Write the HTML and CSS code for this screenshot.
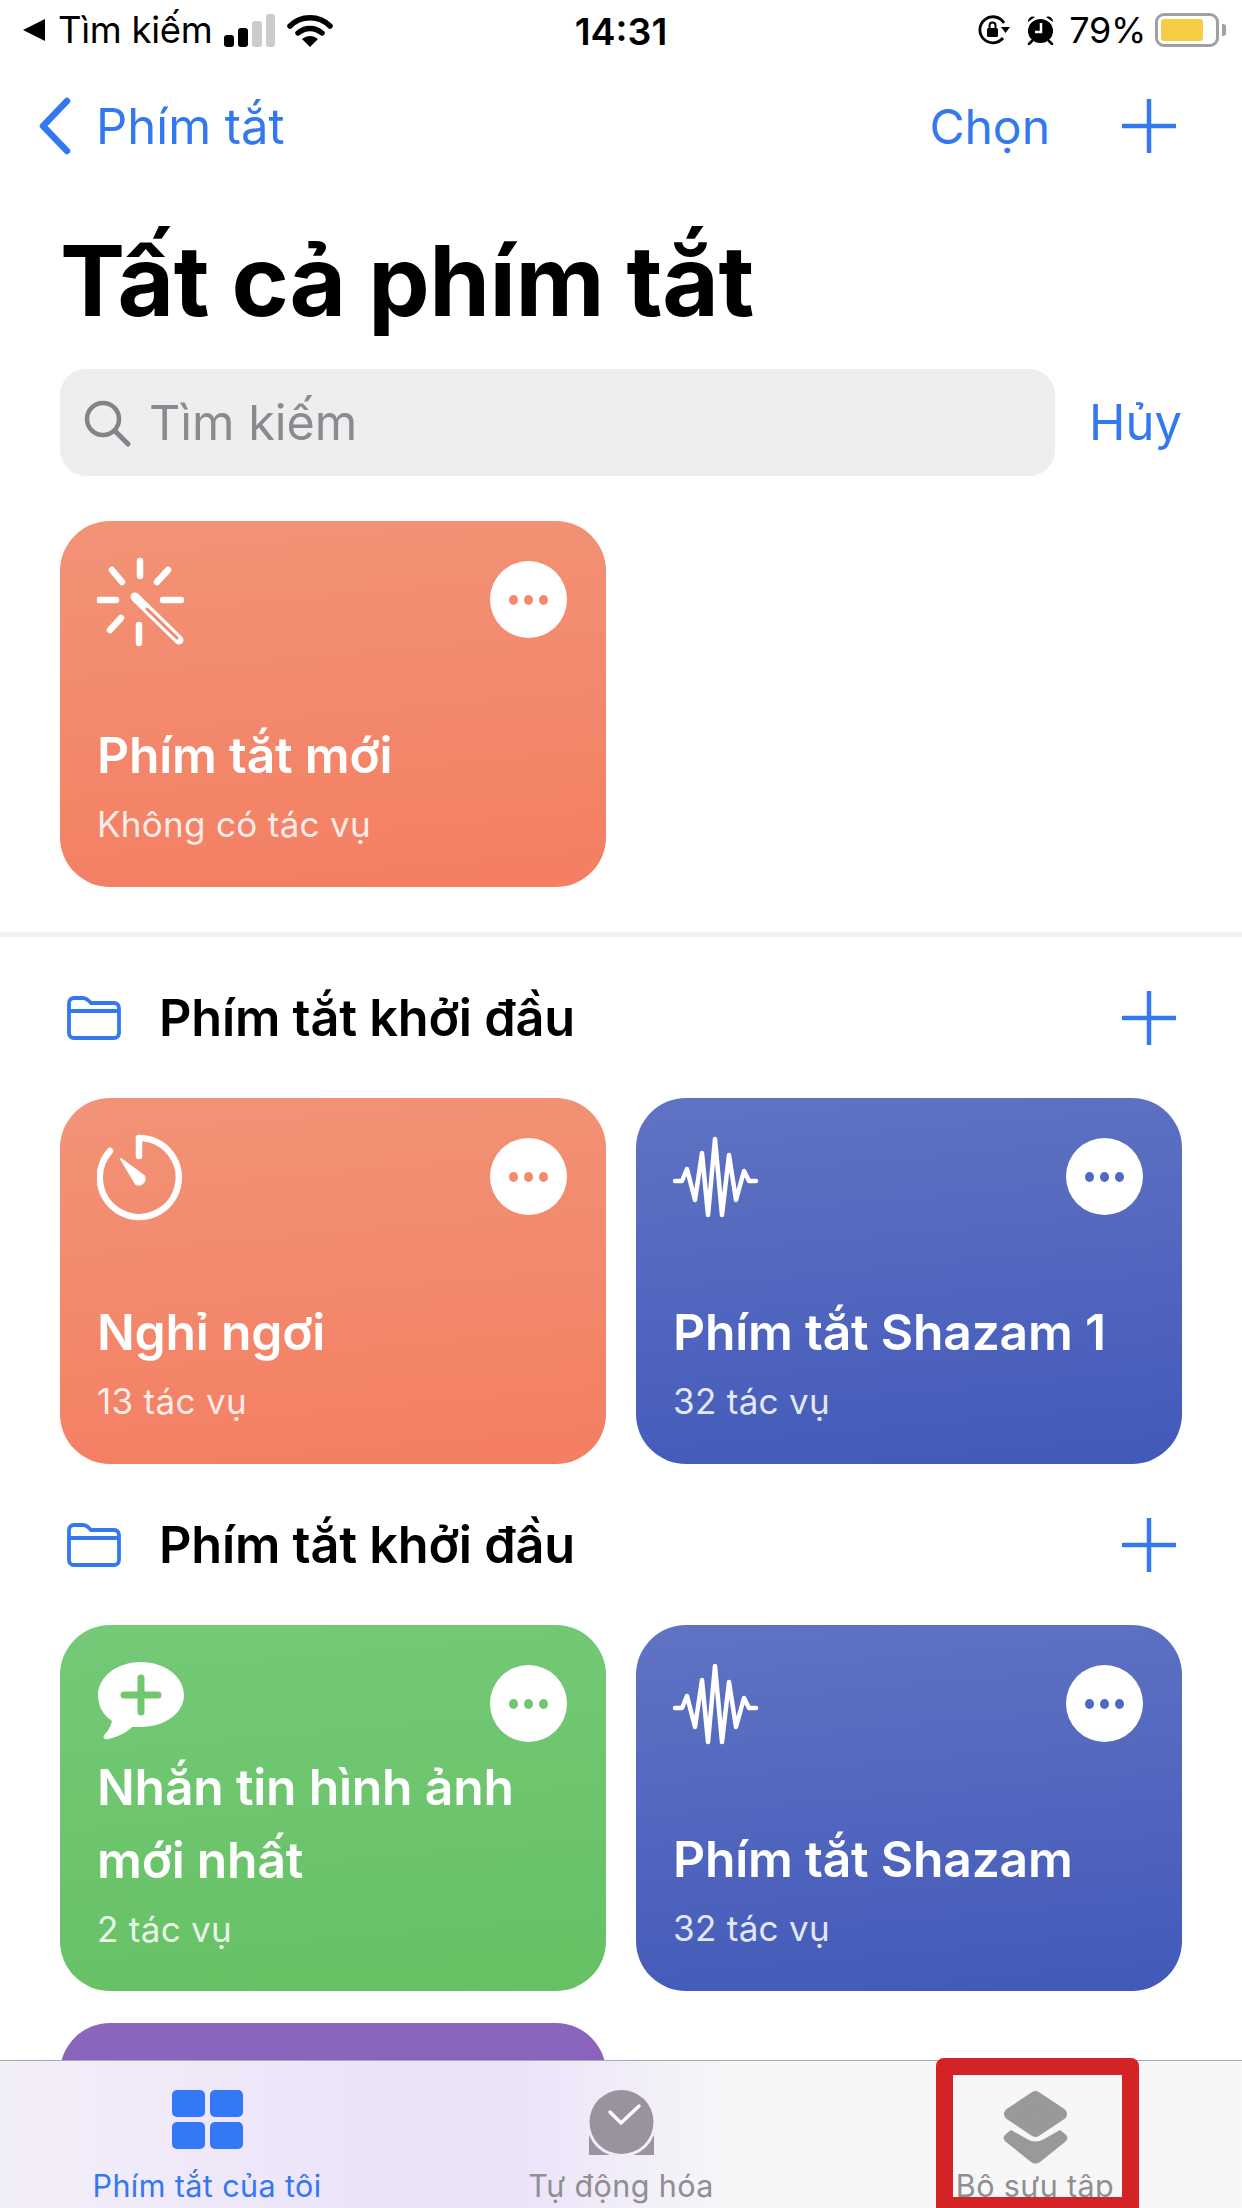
FILE: index.html
```html
<!DOCTYPE html>
<html lang="vi">
<head>
<meta charset="utf-8">
<title>Phím tắt</title>
<link rel="stylesheet" href="styles.css">
</head>
<body>
<div class="screen">
  <div class="status">
    <div class="status-left">
      <svg class="back-tri" width="24" height="24" viewBox="0 0 24 24"><path d="M23 1v22L1 12z" fill="#000"/></svg>
      <span class="status-text">Tìm kiếm</span>
      <svg class="signal" width="51" height="33" viewBox="0 0 51 33"><rect x="0" y="21" width="10" height="12" rx="3" fill="#000"/><rect x="14" y="14" width="10" height="19" rx="3" fill="#000"/><rect x="28" y="7" width="10" height="26" rx="3" fill="#ccc"/><rect x="42" y="0" width="9" height="33" rx="3" fill="#ccc"/></svg>
      <svg class="wifi" width="46" height="33" viewBox="0 0 46 33"><path d="M3 12C14 1 32 1 43 12" fill="none" stroke="#000" stroke-width="5.500" stroke-linecap="round"/><path d="M11 19c7-6 17-6 24 0" fill="none" stroke="#000" stroke-width="5.500" stroke-linecap="round"/><path d="M15 25c5-4 11-4 16 0l-8 8z" fill="#000"/></svg>
    </div>
    <div class="status-time">14:31</div>
    <div class="status-right">
      <svg class="rot" width="32" height="30" viewBox="0 0 32 30"><path d="M25 23A13 13 0 1 1 26 8" fill="none" stroke="#000" stroke-width="2.800"/><path d="M23 12h9l-4.500 6z" fill="#000"/><rect x="9" y="13" width="11" height="9" rx="1.500" fill="#000"/><path d="M11.500 13v-2.500a3 3 0 0 1 6 0V13" fill="none" stroke="#000" stroke-width="2"/></svg>
      <svg class="alarm" width="27" height="30" viewBox="0 0 27 30"><ellipse cx="13.500" cy="16" rx="12.500" ry="12" fill="#000"/><path d="M1 7a5 5 0 0 1 7-5zM26 7a5 5 0 0 0-7-5z" fill="#000"/><path d="M5 26l-3 3M22 26l3 3" stroke="#000" stroke-width="2.500" stroke-linecap="round"/><path d="M14 8v9H8" fill="none" stroke="#fff" stroke-width="2.500"/></svg>
      <span class="status-text pct">79%</span>
      <div class="battery"><div class="battery-fill"></div></div>
      <div class="battery-tip"></div>
    </div>
  </div>

  <div class="nav">
    <div class="nav-back">
      <svg width="34" height="58" viewBox="0 0 34 58"><path d="M29 4L5 29l24 25" fill="none" stroke="#3478f0" stroke-width="6.500" stroke-linecap="round" stroke-linejoin="round"/></svg>
      <span>Phím tắt</span>
    </div>
    <div class="nav-right">
      <span>Chọn</span>
      <svg class="plus-lg" width="54" height="54" viewBox="0 0 54 54"><path d="M27 1v52M1 27h52" stroke="#3478f0" stroke-width="4.500" stroke-linecap="round"/></svg>
    </div>
  </div>

  <h1 class="title">Tất cả phím tắt</h1>

  <div class="search-row">
    <div class="search">
      <svg width="50" height="50" viewBox="0 0 50 50"><circle cx="21" cy="21" r="16" fill="none" stroke="#83838a" stroke-width="4.500"/><path d="M33 33l13 13" stroke="#83838a" stroke-width="5" stroke-linecap="round"/></svg>
      <span>Tìm kiếm</span>
    </div>
    <span class="cancel">Hủy</span>
  </div>

  <div class="grid first">
    <div class="card orange">
      <div class="card-top">
        <svg class="card-icon" width="88" height="90" viewBox="0 0 88 90"><path d="M43 4v15M15 13l10 12M71 13l-11 12M2 43h17M66 43h18M24 61l-11 12M42 68v18" fill="none" stroke="#fff" stroke-width="6.500" stroke-linecap="round"/><path d="M38 40l44 43" stroke="#fff" stroke-width="9" stroke-linecap="round"/><path d="M50 52l30 29" stroke="#f0896d" stroke-width="3" stroke-linecap="round"/></svg>
        <div class="more"><i></i><i></i><i></i></div>
      </div>
      <div class="card-title">Phím tắt mới</div>
      <div class="card-sub">Không có tác vụ</div>
    </div>
  </div>

  <div class="divider"></div>

  <div class="sec-head">
    <svg width="56" height="46" viewBox="0 0 56 46"><path d="M3 8a5 5 0 0 1 5-5h9c3 0 4 1 6 3l2 2h23a5 5 0 0 1 5 5v25a5 5 0 0 1-5 5H8a5 5 0 0 1-5-5z" fill="none" stroke="#3478f0" stroke-width="3.800"/><path d="M3 16h50" stroke="#3478f0" stroke-width="3.800"/></svg>
    <span class="sec-title">Phím tắt khởi đầu</span>
    <svg class="plus-lg" width="54" height="54" viewBox="0 0 54 54"><path d="M27 1v52M1 27h52" stroke="#3478f0" stroke-width="4.500" stroke-linecap="round"/></svg>
  </div>
  <div class="grid">
    <div class="card orange">
      <div class="card-top">
        <svg class="card-icon" width="88" height="88" viewBox="0 0 88 88"><path d="M42 4a39.500 39.500 0 1 1-29 13" fill="none" stroke="#fff" stroke-width="6.500" stroke-linecap="round"/><path d="M42 4v18" stroke="#fff" stroke-width="6.500" stroke-linecap="round"/><path d="M24 25l23 17a6 6 0 0 1-8 8z" fill="#fff" stroke="#fff" stroke-width="2" stroke-linejoin="round"/></svg>
        <div class="more"><i></i><i></i><i></i></div>
      </div>
      <div class="card-title">Nghỉ ngơi</div>
      <div class="card-sub">13 tác vụ</div>
    </div>
    <div class="card blue">
      <div class="card-top">
        <svg class="card-icon" width="88" height="88" viewBox="0 0 88 88"><path d="M2 47H9L14 35L22 66L29 19L35 81L42 5L49 81L56 21L63 66L71 37L76 47H83" fill="none" stroke="#fff" stroke-width="4.500" stroke-linecap="round" stroke-linejoin="round"/></svg>
        <div class="more"><i></i><i></i><i></i></div>
      </div>
      <div class="card-title">Phím tắt Shazam 1</div>
      <div class="card-sub">32 tác vụ</div>
    </div>
  </div>

  <div class="sec-head">
    <svg width="56" height="46" viewBox="0 0 56 46"><path d="M3 8a5 5 0 0 1 5-5h9c3 0 4 1 6 3l2 2h23a5 5 0 0 1 5 5v25a5 5 0 0 1-5 5H8a5 5 0 0 1-5-5z" fill="none" stroke="#3478f0" stroke-width="3.800"/><path d="M3 16h50" stroke="#3478f0" stroke-width="3.800"/></svg>
    <span class="sec-title">Phím tắt khởi đầu</span>
    <svg class="plus-lg" width="54" height="54" viewBox="0 0 54 54"><path d="M27 1v52M1 27h52" stroke="#3478f0" stroke-width="4.500" stroke-linecap="round"/></svg>
  </div>
  <div class="grid">
    <div class="card green">
      <div class="card-top">
        <svg class="card-icon" width="88" height="82" viewBox="0 0 88 82"><path d="M44 1c24 0 43 15 43 33S68 66 44 66c-3 0-6 0-9 0-6 6-15 10-24 12-4 1-6-2-3-5 3-3 6-8 7-13C6 54 1 45 1 34 1 16 20 1 44 1z" fill="#fff"/><path d="M44 17v34M27 34h34" stroke="#6fc76f" stroke-width="7" stroke-linecap="round"/></svg>
        <div class="more"><i></i><i></i><i></i></div>
      </div>
      <div class="card-title two">Nhắn tin hình ảnh<br>mới nhất</div>
      <div class="card-sub">2 tác vụ</div>
    </div>
    <div class="card blue">
      <div class="card-top">
        <svg class="card-icon" width="88" height="88" viewBox="0 0 88 88"><path d="M2 47H9L14 35L22 66L29 19L35 81L42 5L49 81L56 21L63 66L71 37L76 47H83" fill="none" stroke="#fff" stroke-width="4.500" stroke-linecap="round" stroke-linejoin="round"/></svg>
        <div class="more"><i></i><i></i><i></i></div>
      </div>
      <div class="card-title">Phím tắt Shazam</div>
      <div class="card-sub">32 tác vụ</div>
    </div>
  </div>
  <div class="grid last">
    <div class="card purple"></div>
  </div>

  <div class="tabbar">
    <div class="tab active">
      <div class="tab-icon">
        <svg width="71" height="59" viewBox="0 0 71 59"><rect x="0" y="0" width="33" height="27" rx="5" fill="#3478f6"/><rect x="38" y="0" width="33" height="27" rx="5" fill="#3478f6"/><rect x="0" y="32" width="33" height="27" rx="5" fill="#3478f6"/><rect x="38" y="32" width="33" height="27" rx="5" fill="#3478f6"/></svg>
      </div>
      <span>Phím tắt của tôi</span>
    </div>
    <div class="tab">
      <div class="tab-icon">
        <svg width="65" height="65" viewBox="0 0 65 65"><path d="M0 45A35 35 0 0 0 20.800 65H0Z" fill="#98939f"/><path d="M65 45A35 35 0 0 1 44.200 65H65Z" fill="#98939f"/><circle cx="32.500" cy="32" r="32" fill="#98939f"/><path d="M21 22l11 11 18-17" fill="none" stroke="#fff" stroke-width="3.500" stroke-linecap="round" stroke-linejoin="round"/></svg>
      </div>
      <span>Tự động hóa</span>
    </div>
    <div class="tab">
      <div class="tab-icon">
        <svg width="65" height="74" viewBox="0 0 65 74"><path d="M8 40L24 49Q32.500 54 41 49L57 40L62 44Q67 48 62 52L37 72Q32.500 75 28 72L3 52Q-2 48 3 44Z" fill="#999"/><path d="M32.500 7L58 24L32.500 41L7 24Z" fill="#999" stroke="#999" stroke-width="12" stroke-linejoin="round"/></svg>
      </div>
      <span>Bộ sưu tập</span>
    </div>
    <div class="highlight"></div>
  </div>
</div>
</body>
</html>
```
FILE: styles.css
```css
* { box-sizing: border-box; }
html, body { margin: 0; padding: 0; }
body { width: 1242px; height: 2208px; overflow: hidden; background: #fff; font-family: Inter, "Noto Sans", sans-serif; color: #000; }
.screen { position: relative; width: 1242px; height: 2208px; overflow: hidden; }
.status { height: 62px; padding: 12px 16px 0 22px; display: flex; align-items: flex-start; justify-content: space-between; position: relative; }
.status-left, .status-right { display: flex; align-items: center; height: 36px; }
.status-text { font-size: 36.500px; letter-spacing: -0.3px; }
.status-text.pct { font-size: 36px; }
.back-tri { margin-right: 12px; }
.signal { margin: 0 12px 0 12px; }
.status-time { position: absolute; left: 0; right: 0; top: 9px; text-align: center; font-size: 37.500px; font-weight: 600; }
.rot { margin-right: 17px; }
.alarm { margin-right: 15px; }
.battery { width: 64px; height: 34px; border: 3px solid #a0a0a0; border-radius: 9px; padding: 3px; margin-left: 9px; }
.battery-fill { width: 42px; height: 100%; background: #f7cd45; border-radius: 3px; }
.battery-tip { width: 4px; height: 12px; background: #a0a0a0; border-radius: 0 3px 3px 0; margin-left: 3px; }
.nav { height: 128px; padding: 0 66px 0 38px; display: flex; align-items: center; justify-content: space-between; color: #3478f0; font-size: 49px; }
.nav-back { display: flex; align-items: center; gap: 24px; }
.nav-right { display: flex; align-items: center; gap: 72px; font-size: 48px; }
.plus-lg { flex: none; }
.title { margin: 0; padding: 0 0 0 60px; height: 179px; font-size: 97.600px; font-weight: 700; line-height: 182px; letter-spacing: -0.5px; white-space: nowrap; }
.search-row { padding: 0 60px; height: 107px; display: flex; align-items: center; justify-content: space-between; }
.search { width: 995px; height: 107px; background: #eeeeef; border-radius: 26px; display: flex; align-items: center; gap: 17px; padding-left: 22px; color: #8a8a90; font-size: 48.500px; }
.cancel { color: #3478f0; font-size: 49px; }
.grid { padding: 0 60px; display: grid; grid-template-columns: 546px 546px; gap: 30px; }
.grid.first { margin-top: 45px; }
.card { height: 366px; border-radius: 50px; color: #fff; padding: 36px 39px 0 37px; display: flex; flex-direction: column; }
.orange { background: linear-gradient(175deg, #f29377, #f47e62); }
.blue { background: linear-gradient(175deg, #6073c3, #4259b9); }
.green { background: linear-gradient(175deg, #75c977, #65c164); }
.purple { background: linear-gradient(175deg, #8b66be, #8159b8); }
.card-top { display: flex; justify-content: space-between; align-items: flex-start; height: 90px; }
.more { width: 77px; height: 77px; margin: 4px 0 0; border-radius: 50%; background: #fff; display: flex; align-items: center; justify-content: center; gap: 6px; }
.more i { width: 9px; height: 10px; border-radius: 50%; background: currentColor; }
.orange .more { color: #f3896d; }
.blue .more { color: #5068c0; }
.green .more { color: #6fc76f; }
.card-title { margin-top: 81px; font-size: 49.800px; font-weight: 600; line-height: 54px; white-space: nowrap; letter-spacing: -0.2px; }
.card-title.two { margin-top: 0; line-height: 73px; height: 146px; }
.card-title.two + .card-sub { margin-top: 10px; }
.card-sub { margin-top: 20px; font-size: 35px; line-height: 44px; opacity: 0.85; letter-spacing: 0.3px; }
.divider { height: 5px; margin-top: 45px; background: #f2f2f5; }
.sec-head { height: 161px; padding: 0 66px 0 66px; display: flex; align-items: center; gap: 37px; }
.sec-title { flex: 1; font-size: 50.400px; font-weight: 600; letter-spacing: -0.2px; white-space: nowrap; }
.grid.last { margin-top: 32px; }
.tabbar { position: absolute; left: 0; right: 0; top: 2060px; height: 148px; border-top: 1px solid #aaa; background: linear-gradient(90deg, #f3eff9 0%, #ece3f9 30%, #ece3f9 42%, #f6f6f8 58%, #f7f7f7 100%); display: grid; grid-template-columns: 414px 414px 414px; }
.tab { display: flex; flex-direction: column; align-items: center; color: #8e8e93; font-size: 30.500px; position: relative; }
.tab-icon { height: 95px; padding-top: 29px; display: flex; align-items: flex-start; }
.tab span { margin-top: 11px; white-space: nowrap; letter-spacing: 0.4px; }
.tab.active { color: #3478f0; }
.highlight { position: absolute; left: 936px; top: -3px; width: 203px; height: 156px; border: 17px solid #d32326; border-radius: 8px; }
```
